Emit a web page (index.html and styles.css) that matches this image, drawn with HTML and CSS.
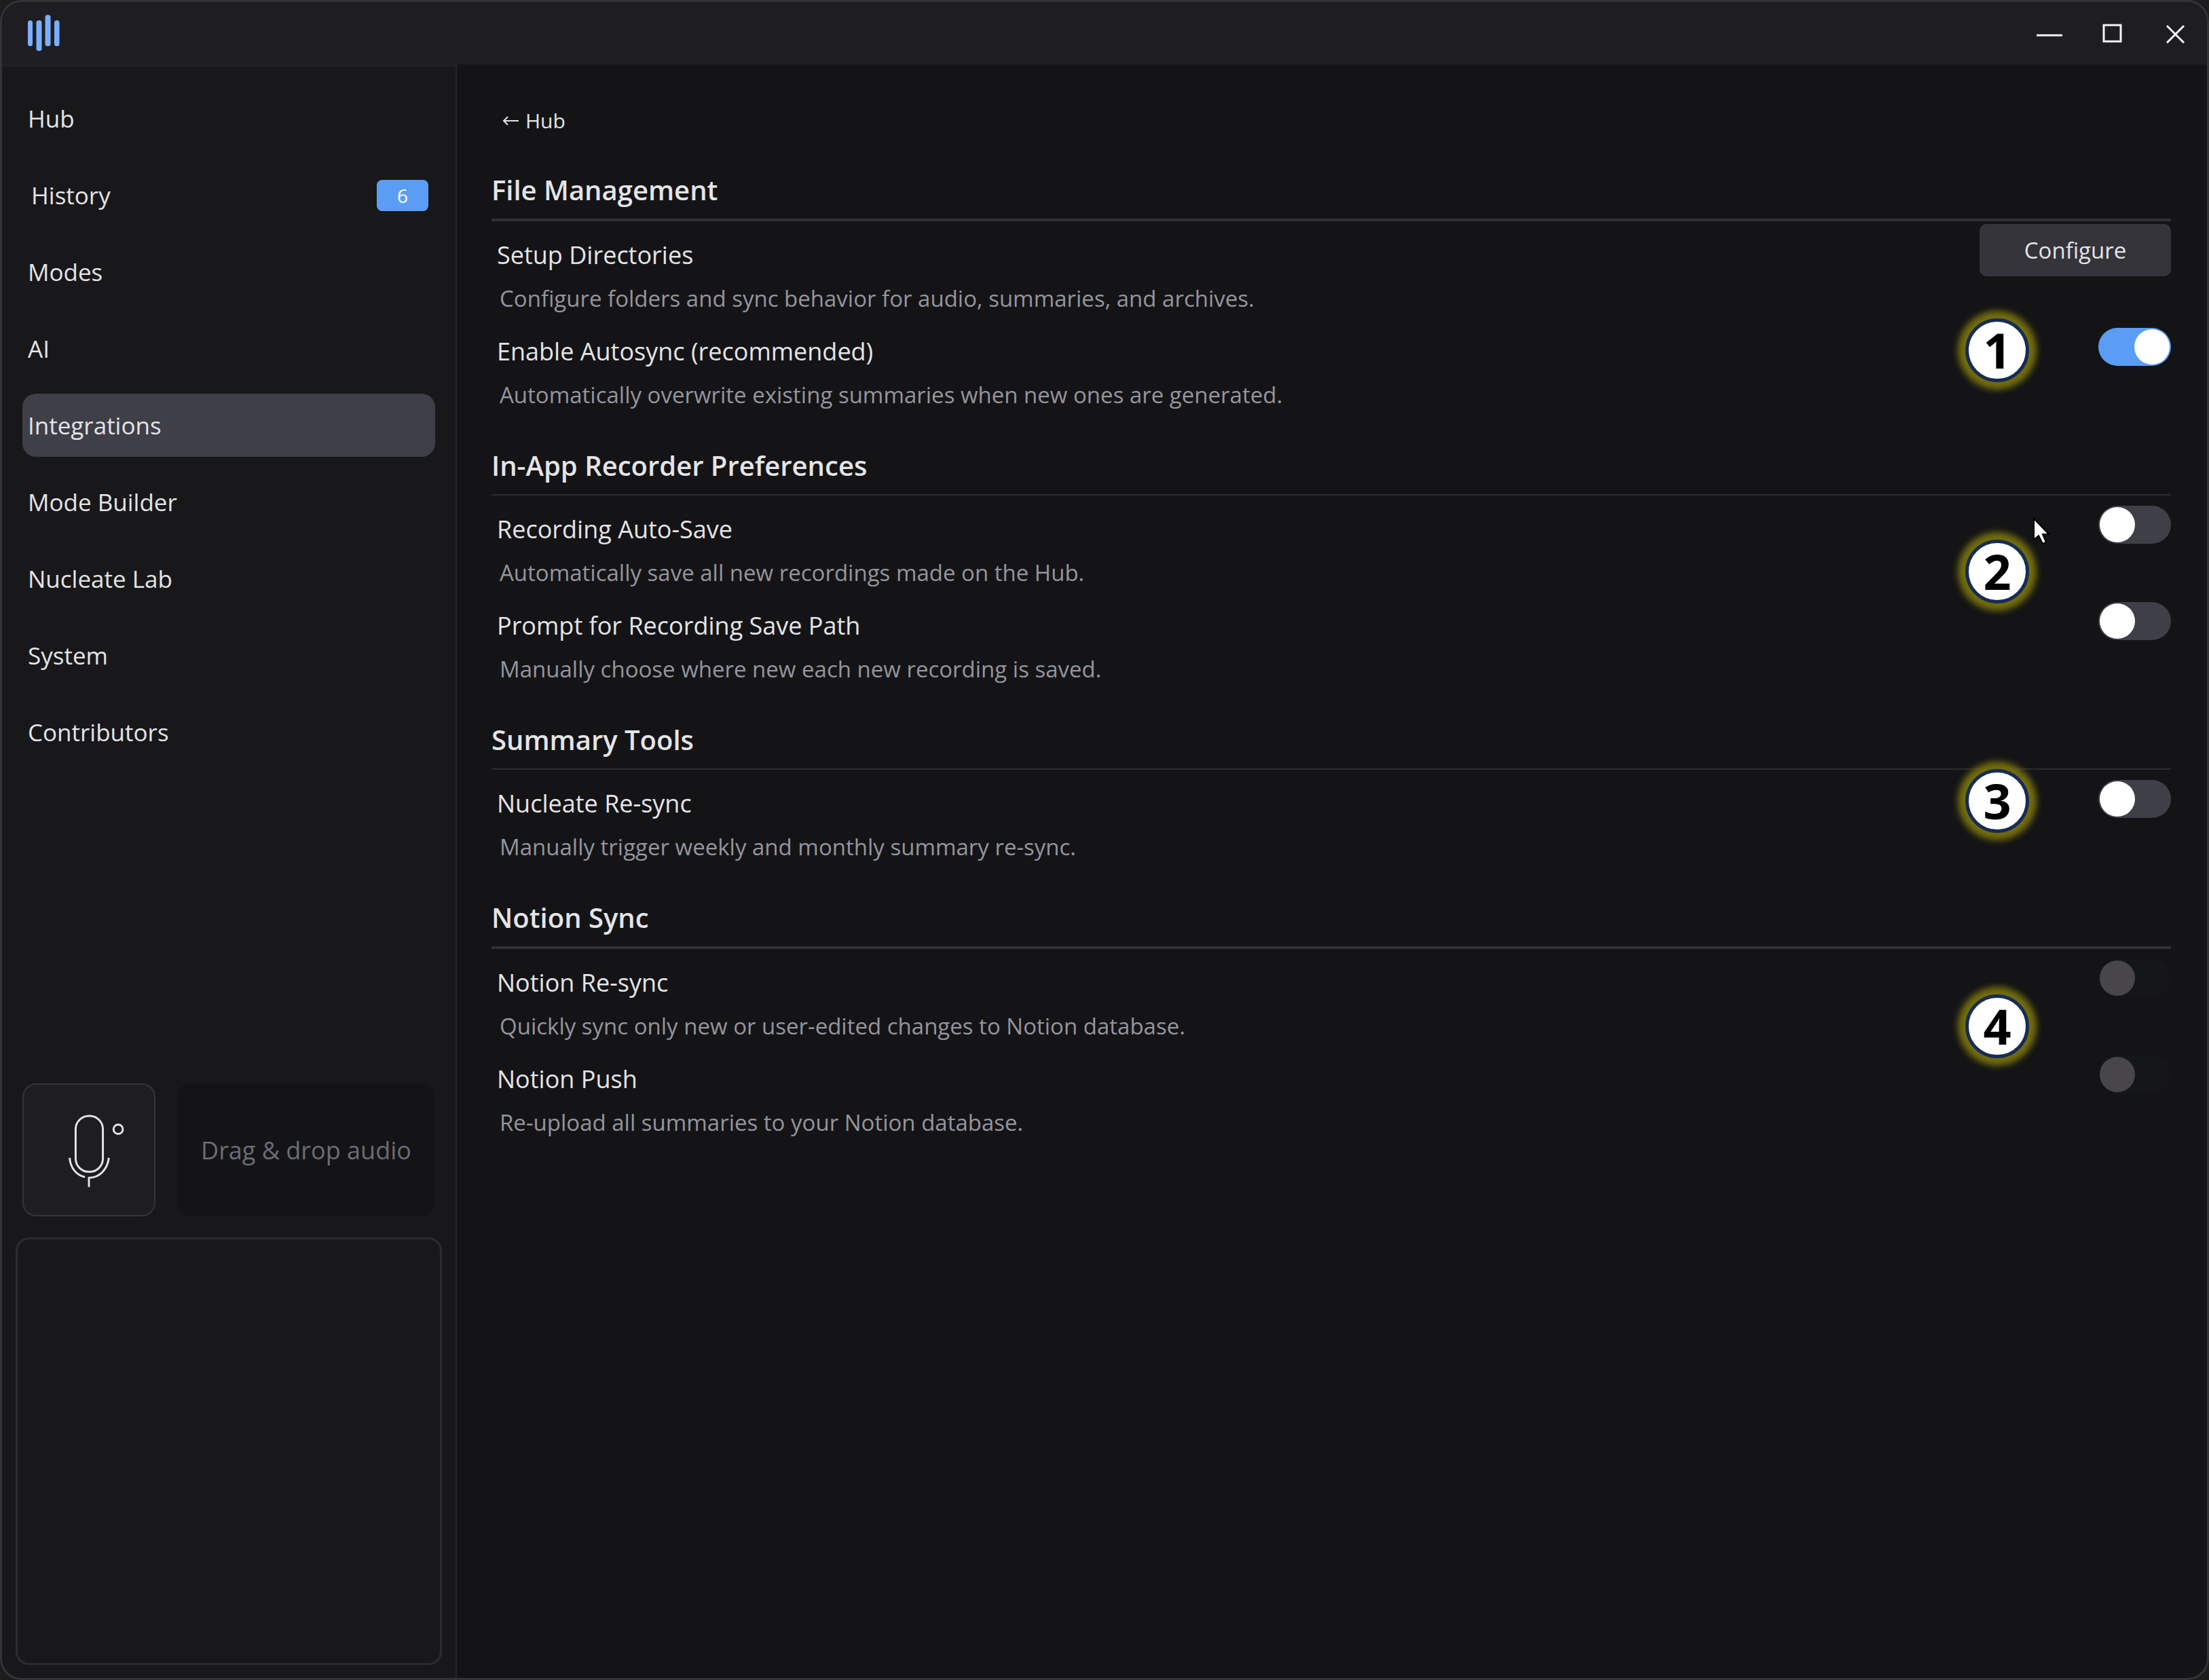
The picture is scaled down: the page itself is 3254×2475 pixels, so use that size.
FILE: index.html
```html
<!DOCTYPE html>
<html lang="en">
  <head>
    <meta charset="UTF-8" />
    <meta name="viewport" content="width=device-width, initial-scale=1" />
    <title>Integrations</title>
    <link rel="stylesheet" href="styles.css">
  </head>
  <body>
    <div class="window">
      <header class="titlebar">
        <svg class="logo" width="48" height="56" viewBox="0 0 48 56" fill="#7aaeff" aria-hidden="true">
          <rect x="0" y="9" width="7" height="38" rx="3.5" />
          <rect x="12.5" y="9" width="8" height="45" rx="3.5" />
          <rect x="25.5" y="1" width="8" height="46" rx="3.5" />
          <rect x="39" y="9" width="7.5" height="38" rx="3.5" />
        </svg>
        <div class="window-controls">
          <button class="window-btn" aria-label="Minimize">
            <svg width="38" height="38" viewBox="0 0 38 38"><path d="M0 22h38" /></svg>
          </button>
          <button class="window-btn" aria-label="Maximize">
            <svg width="38" height="38" viewBox="0 0 38 38"><rect x="6" y="7" width="25" height="24" /></svg>
          </button>
          <button class="window-btn" aria-label="Close">
            <svg width="38" height="38" viewBox="0 0 38 38"><path d="M6 8l25 25M31 8L6 33" /></svg>
          </button>
        </div>
      </header>

      <div class="layout">
        <aside class="sidebar">
          <nav class="nav">
            <a href="#hub">Hub</a>
            <a href="#history" class="with-badge">History <span class="badge">6</span></a>
            <a href="#modes">Modes</a>
            <a href="#ai">AI</a>
            <a href="#integrations" class="active">Integrations</a>
            <a href="#mode-builder">Mode Builder</a>
            <a href="#nucleate-lab">Nucleate Lab</a>
            <a href="#system">System</a>
            <a href="#contributors">Contributors</a>
          </nav>

          <div class="audio-row">
            <button class="mic-btn" aria-label="Record">
              <svg viewBox="0 0 196 196" fill="none" stroke="#e4e4e7" stroke-width="3">
                <rect x="78" y="47" width="41" height="84" rx="20" />
                <path d="M69 110c1 15 10 26 23 29" />
                <path d="M98 154v-14c16 0 28-13 30-30" />
                <circle cx="142" cy="67" r="7" />
              </svg>
            </button>
            <div class="drop-zone">Drag &amp; drop audio</div>
          </div>

          <div class="preview"></div>
        </aside>

        <main class="content" id="integrations">
          <a href="#hub" class="back">
            <svg width="24" height="14" viewBox="0 0 24 14" fill="none" stroke="#e4e4e7" stroke-width="2" aria-hidden="true">
              <path d="M24 7H2M8 1L2 7l6 6" />
            </svg>
            Hub
          </a>

          <section class="group thick">
            <h2>File Management</h2>
            <div class="setting">
              <div class="text">
                <h3>Setup Directories</h3>
                <p>Configure folders and sync behavior for audio, summaries, and archives.</p>
              </div>
              <button class="configure">Configure</button>
            </div>
            <div class="setting">
              <div class="text">
                <label for="autosync">Enable Autosync (recommended)</label>
                <p>Automatically overwrite existing summaries when new ones are generated.</p>
              </div>
              <input type="checkbox" class="toggle" id="autosync" checked />
            </div>
            <span class="marker marker-1">1</span>
          </section>

          <section class="group">
            <h2>In-App Recorder Preferences</h2>
            <div class="setting">
              <div class="text">
                <label for="autosave">Recording Auto-Save</label>
                <p>Automatically save all new recordings made on the Hub.</p>
              </div>
              <input type="checkbox" class="toggle" id="autosave" />
            </div>
            <div class="setting">
              <div class="text">
                <label for="savepath">Prompt for Recording Save Path</label>
                <p>Manually choose where new each new recording is saved.</p>
              </div>
              <input type="checkbox" class="toggle" id="savepath" />
            </div>
            <span class="marker marker-2">2</span>
            <svg class="cursor" width="26" height="42" viewBox="0 0 26 42" aria-hidden="true">
              <path d="M2 2v31l7-6 6 12 5-2-5-12h9z" fill="#fff" stroke="#000" stroke-width="2" />
            </svg>
          </section>

          <section class="group">
            <h2>Summary Tools</h2>
            <div class="setting">
              <div class="text">
                <label for="resync">Nucleate Re-sync</label>
                <p>Manually trigger weekly and monthly summary re-sync.</p>
              </div>
              <input type="checkbox" class="toggle" id="resync" />
            </div>
            <span class="marker marker-3">3</span>
          </section>

          <section class="group thick">
            <h2>Notion Sync</h2>
            <div class="setting">
              <div class="text">
                <label for="notion-resync">Notion Re-sync</label>
                <p>Quickly sync only new or user-edited changes to Notion database.</p>
              </div>
              <input type="checkbox" class="toggle" id="notion-resync" disabled />
            </div>
            <div class="setting">
              <div class="text">
                <label for="notion-push">Notion Push</label>
                <p>Re-upload all summaries to your Notion database.</p>
              </div>
              <input type="checkbox" class="toggle" id="notion-push" disabled />
            </div>
            <span class="marker marker-4">4</span>
          </section>
        </main>
      </div>
    </div>
  </body>
</html>
```

FILE: styles.css
```css
* {
  margin: 0;
  padding: 0;
  box-sizing: border-box;
}

body {
  font-family: "Segoe UI", "Open Sans", "Noto Sans", sans-serif;
  font-size: 36px;
  background: #1c1c1c;
  color: #e4e4e7;
}

button {
  font-family: inherit;
  color: inherit;
  border: none;
  cursor: pointer;
}

a {
  color: inherit;
  text-decoration: none;
}

.window {
  display: flex;
  flex-direction: column;
  min-height: 100vh;
  border: 3px solid #333338;
  border-radius: 32px;
  overflow: hidden;
  background: #141416;
}

/* Title bar */
.titlebar {
  display: flex;
  justify-content: space-between;
  align-items: center;
  height: 92px;
  padding-left: 38px;
  background: #1e1e22;
}

.window-controls {
  display: flex;
  height: 100%;
}

.window-btn {
  display: flex;
  justify-content: center;
  align-items: center;
  width: 93px;
  background: none;
}

.window-btn svg {
  fill: none;
  stroke: #f4f4f5;
  stroke-width: 3;
}

.layout {
  display: flex;
  flex: 1;
}

/* Sidebar */
.sidebar {
  display: flex;
  flex-direction: column;
  width: 670px;
  padding: 30px 20px 19px;
  background: #18181a;
  border-top: 3px solid #222225;
  border-right: 2px solid #26262a;
}

.nav {
  display: flex;
  flex-direction: column;
  gap: 20px;
  padding: 0 10px;
}

.nav a {
  display: flex;
  align-items: center;
  justify-content: space-between;
  height: 93px;
  padding: 0 10px 0 8px;
  border-radius: 20px;
  font-size: 35px;
}

.nav a.with-badge {
  padding-left: 13px;
}

.nav a.active {
  background: #3f3f47;
}

.badge {
  width: 76px;
  line-height: 46px;
  border-radius: 8px;
  background: #5b9df5;
  color: #fff;
  font-size: 28px;
  text-align: center;
}

.audio-row {
  display: flex;
  gap: 32px;
  margin-top: auto;
  padding: 0 10px;
}

.mic-btn {
  width: 196px;
  height: 196px;
  border: 2px solid #333338;
  border-radius: 20px;
  background: #1e1e22;
}

.mic-btn svg {
  display: block;
  width: 100%;
}

.drop-zone {
  display: flex;
  flex: 1;
  justify-content: center;
  align-items: center;
  border-radius: 20px;
  background: #141416;
  color: #6c6c74;
}

.preview {
  height: 630px;
  margin-top: 31px;
  border: 3px solid #2c2c30;
  border-radius: 20px;
}

/* Settings */
.content {
  flex: 1;
  padding: 55px 53px 0 51px;
}

.back {
  display: flex;
  align-items: center;
  gap: 10px;
  padding-left: 16px;
  margin-bottom: 36px;
  font-size: 30px;
  line-height: 56px;
}

.group {
  position: relative;
  margin-bottom: 38px;
}

.group h2 {
  padding-bottom: 4px;
  border-bottom: 2px solid #2c2c30;
  font-size: 40px;
  font-weight: 600;
  line-height: 76px;
}

.group.thick h2 {
  border-bottom: 4px solid #323236;
}

.setting {
  display: flex;
  justify-content: space-between;
  align-items: flex-start;
  padding-left: 8px;
}

.text {
  padding-top: 22px;
}

.text h3,
.text label {
  display: block;
  font-size: 36px;
  font-weight: 400;
  line-height: 56px;
}

.text p {
  margin-top: 8px;
  padding-left: 4px;
  color: #95959d;
  font-size: 33px;
  line-height: 56px;
}

.configure {
  width: 282px;
  height: 77px;
  margin-top: 4px;
  border-radius: 10px;
  background: #34343a;
  font-size: 33px;
}

.toggle {
  appearance: none;
  width: 107px;
  height: 56px;
  margin-top: 15px;
  padding: 2px;
  border-radius: 28px;
  background: #3f3f47;
  cursor: pointer;
}

.toggle::before {
  content: "";
  display: block;
  width: 52px;
  height: 52px;
  border-radius: 50%;
  background: #fff;
}

.toggle:checked {
  background: #5b9df5;
}

.toggle:checked::before {
  margin-left: auto;
}

.toggle:disabled {
  background: #141619;
}

.toggle:disabled::before {
  background: #48464b;
}

/* Numbered callouts */
.marker {
  position: absolute;
  right: 209px;
  width: 94px;
  height: 94px;
  border: 5px solid #172c54;
  border-radius: 50%;
  background: #fff;
  box-shadow: 0 0 10px 11px #736d0e;
  color: #000;
  font-size: 72px;
  font-weight: 700;
  line-height: 82px;
  text-align: center;
}

.marker-1 {
  top: 227px;
}

.marker-2 {
  top: 147px;
}

.marker-3 {
  top: 81px;
}

.marker-4 {
  top: 151px;
}

.cursor {
  position: absolute;
  top: 114px;
  right: 178px;
}
```
